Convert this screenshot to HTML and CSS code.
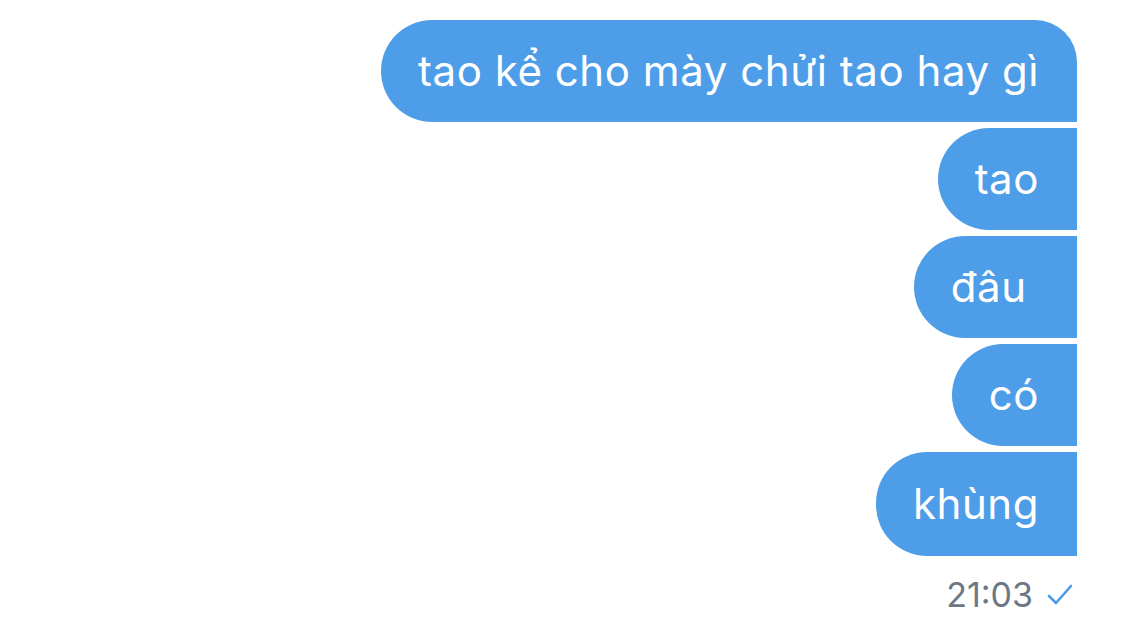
FILE: index.html
```html
<!DOCTYPE html>
<html lang="vi">
<head>
    <meta charset="UTF-8">
    <title>Chat</title>
    <link rel="stylesheet" href="styles.css">
</head>
<body>
    <div class="thread">
        <div class="bubble first">tao kể cho mày chửi tao hay gì</div>
        <div class="bubble">tao</div>
        <div class="bubble">đâu&nbsp;</div>
        <div class="bubble">có</div>
        <div class="bubble last">khùng</div>
        <div class="meta">
            <span class="time">21:03</span>
            <svg class="check" width="26" height="22" viewBox="0 0 26 22">
                <path d="M2 12 L9 19 L24 2" fill="none" stroke="#4b9ce8" stroke-width="2.6" stroke-linecap="round" stroke-linejoin="round"/>
            </svg>
        </div>
    </div>
</body>
</html>
```

FILE: styles.css
```css
body {
    margin: 0;
    background: #fff;
    font-family: 'Inter', 'Roboto', sans-serif;
}

.thread {
    display: flex;
    flex-direction: column;
    align-items: flex-end;
    gap: 6px;
    padding: 20px 48px 0 0;
}

.bubble {
    background-color: #4d9de8;
    color: #fff;
    font-size: 42px;
    letter-spacing: 0.55px;
    height: 102px;
    line-height: 102px;
    padding: 0 38px 0 37px;
    border-radius: 51px 0 0 51px;
    white-space: pre;
    box-sizing: border-box;
}

.bubble.first {
    border-top-right-radius: 42px;
}

.bubble.last {
    height: 104px;
    line-height: 104px;
}

.meta {
    display: flex;
    align-items: center;
    gap: 14px;
    margin-top: 12px;
    padding-right: 4px;
}

.time {
    font-size: 34px;
    color: #6b7785;
}

.check {
    display: block;
}
```
